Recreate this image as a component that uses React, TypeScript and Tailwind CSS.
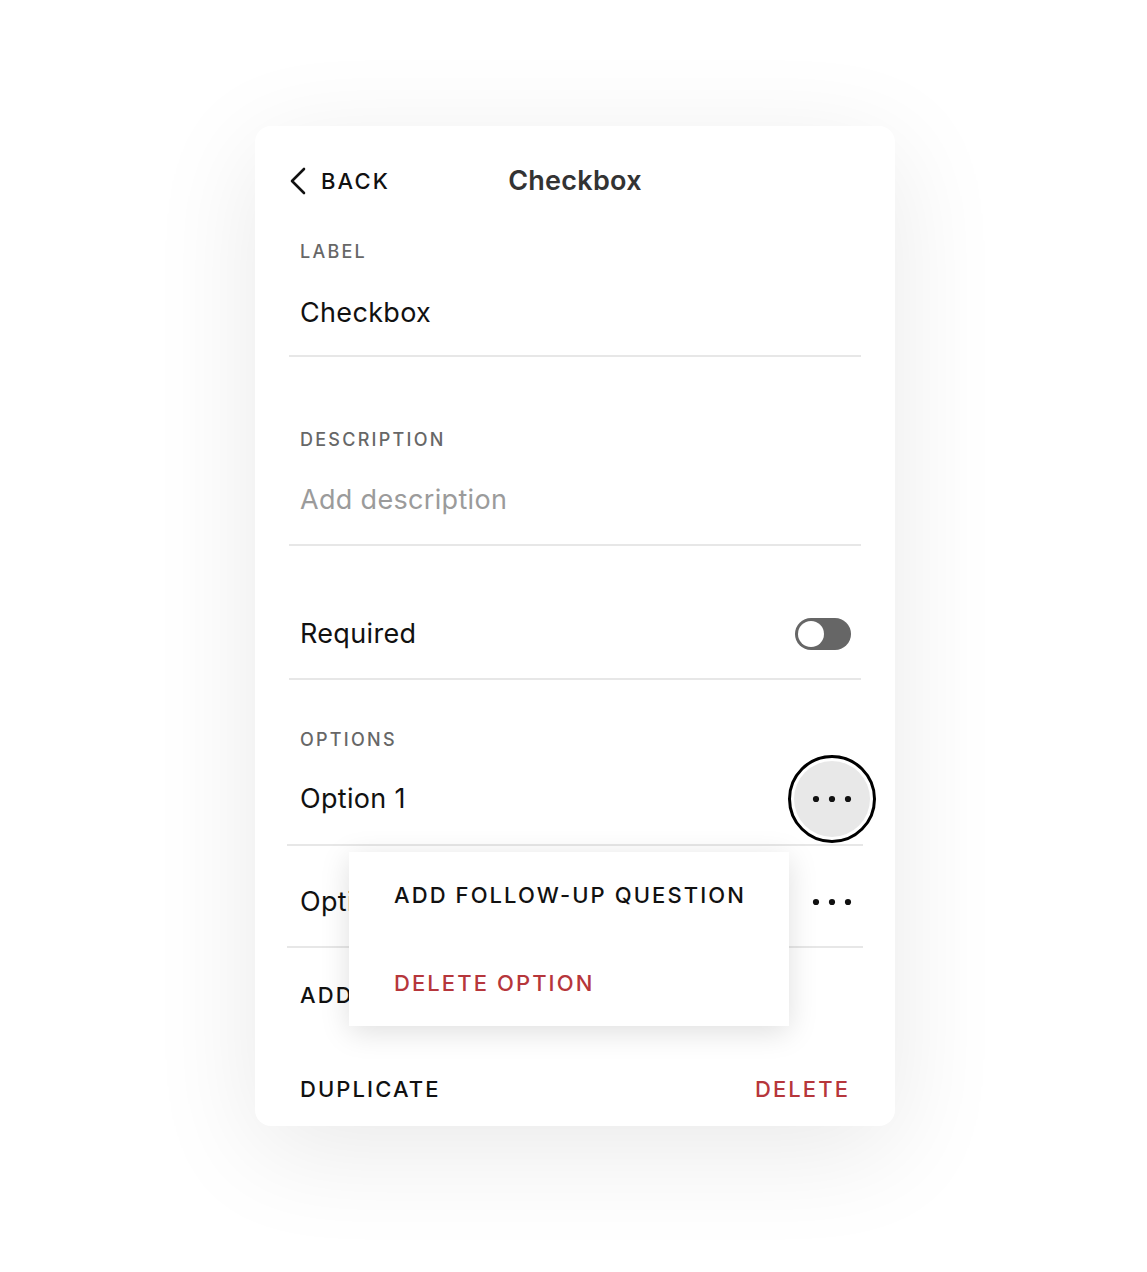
import React from 'react'

const font = { fontFamily: 'Inter, "Liberation Sans", sans-serif' }

function Dots() {
  return (
    <svg width="40" height="8" viewBox="0 0 40 8" className="block">
      <circle cx="4" cy="4" r="3.1" fill="#111" />
      <circle cx="20" cy="4" r="3.1" fill="#111" />
      <circle cx="36" cy="4" r="3.1" fill="#111" />
    </svg>
  )
}

function FieldLabel({ children }: { children: React.ReactNode }) {
  return (
    <div className="h-[24px] leading-[24px] text-[18px] tracking-[0.125em] text-[#676767] font-medium">
      {children}
    </div>
  )
}

// caps action text used for BACK, menu items and footer buttons
const caps = 'h-[24px] leading-[24px] whitespace-nowrap text-[22px] tracking-[0.095em] font-medium'
const body = 'h-[36px] leading-[36px] whitespace-nowrap text-[27px] tracking-[0.012em]'

export default function App() {
  return (
    <div className="min-h-[1272px] w-[1147px] bg-white pt-[126px] pl-[255px]" style={font}>
      <div className="relative w-[640px] rounded-[16px] bg-white px-[34px] pt-[27px] pb-[25px] shadow-[0_24px_110px_rgba(0,0,0,0.09)]">
        {/* header */}
        <div className="relative flex h-[56px] items-center">
          <div className="flex items-center">
            <svg width="18" height="28" viewBox="0 0 18 28" fill="none" className="block">
              <path d="M15 2 L3 14 L15 26" stroke="#111" strokeWidth="2.6" strokeLinecap="round" strokeLinejoin="round" />
            </svg>
            <span className={`ml-[14px] text-[#111] ${caps}`}>BACK</span>
          </div>
          <div className="absolute inset-0 flex items-center justify-center text-[27px] tracking-[0.01em] font-semibold text-[#333]">
            Checkbox
          </div>
        </div>

        {/* label */}
        <div className="mt-[31px] border-b-2 border-[#e7e7e7] px-[11px] pb-[24px]">
          <FieldLabel>LABEL</FieldLabel>
          <div className={`mt-[31px] text-[#111] ${body}`}>Checkbox</div>
        </div>

        {/* description */}
        <div className="mt-[71px] border-b-2 border-[#e7e7e7] px-[11px] pb-[26px]">
          <FieldLabel>DESCRIPTION</FieldLabel>
          <div className={`mt-[30px] text-[#9b9b9b] ${body}`}>Add description</div>
        </div>

        {/* required */}
        <div className="flex items-center justify-between border-b-2 border-[#e7e7e7] pl-[11px] pr-[10px] pt-[70px] pb-[26px]">
          <div className={`text-[#111] ${body}`}>Required</div>
          <div className="flex h-[32px] w-[56px] items-center rounded-full bg-[#666] px-[3px]">
            <div className="h-[26px] w-[26px] rounded-full bg-white" />
          </div>
        </div>

        {/* options */}
        <div className="relative">
          <div className="mt-[48px] px-[11px]">
            <FieldLabel>OPTIONS</FieldLabel>
          </div>
          <div className="-mx-[2px] mt-[4px] flex h-[90px] items-center justify-between border-b-2 border-[#e7e7e7] pl-[13px] pr-[11px] pb-[2px]">
            <div className={`text-[#111] ${body}`}>Option 1</div>
            <div className="relative flex h-[40px] w-[40px] items-center justify-center">
              <div className="absolute left-1/2 top-1/2 h-[88px] w-[88px] -translate-x-1/2 -translate-y-1/2 rounded-full border-[3px] border-black bg-white p-[3px]">
                <div className="h-full w-full rounded-full bg-[#e8e8e8]" />
              </div>
              <div className="relative">
                <Dots />
              </div>
            </div>
          </div>
          <div className="-mx-[2px] flex items-center justify-between border-b-2 border-[#e7e7e7] pl-[13px] pr-[11px] pt-[38px] pb-[26px]">
            <div className={`text-[#111] ${body}`}>Option 2</div>
            <Dots />
          </div>
          <div className="mt-[35px] px-[11px]">
            <div className={`text-[#111] ${caps}`}>ADD OPTION</div>
          </div>

          {/* dropdown menu */}
          <div className="absolute left-[60px] top-[124px] h-[174px] w-[440px] bg-white px-[45px] shadow-[0_6px_28px_rgba(0,0,0,0.13)]">
            <div className={`mt-[31px] text-[#111] ${caps}`}>ADD FOLLOW-UP QUESTION</div>
            <div className={`mt-[64px] text-[#b6363b] ${caps}`}>DELETE OPTION</div>
          </div>
        </div>

        {/* footer */}
        <div className="mt-[70px] flex items-center justify-between px-[11px]">
          <div className={`text-[#111] ${caps}`}>DUPLICATE</div>
          <div className={`text-[#b6363b] ${caps}`}>DELETE</div>
        </div>
      </div>
    </div>
  )
}
